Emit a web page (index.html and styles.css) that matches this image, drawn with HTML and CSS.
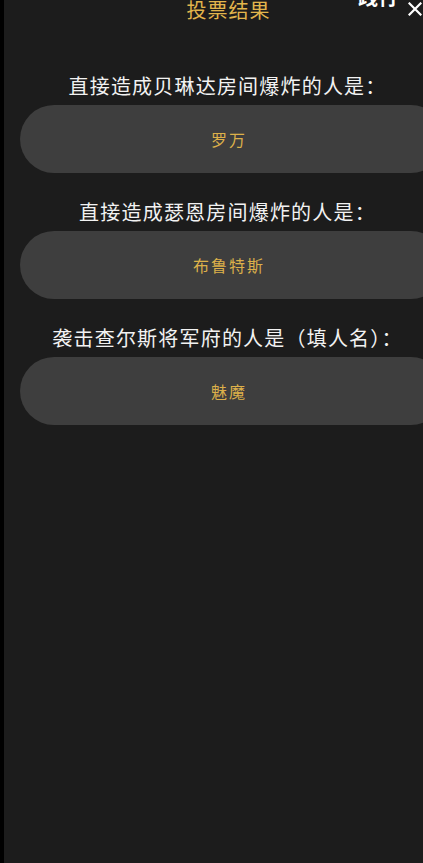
FILE: index.html
```html
<!DOCTYPE html>
<html lang="zh-CN">
  <head>
    <meta charset="UTF-8" />
    <meta name="viewport" content="width=device-width, initial-scale=1.0" />
    <title>投票结果</title>
    <link rel="stylesheet" href="styles.css">
  </head>
  <body>
    <div class="panel">
      <div class="header">
        <span></span>
        <h1 class="title">投票结果</h1>
        <div class="header-right">
          <span class="header-link">践行</span>
          <svg class="close-icon" width="14" height="14" viewBox="0 0 14 14">
            <path d="M1.5 1.5 L12.5 12.5 M12.5 1.5 L1.5 12.5" stroke="#fff" stroke-width="2.2" stroke-linecap="square" fill="none" />
          </svg>
        </div>
      </div>

      <div class="content">
        <div class="question">
          <p class="question-text">直接造成贝琳达房间爆炸的人是：</p>
          <div class="answer">罗万</div>
        </div>
        <div class="question">
          <p class="question-text">直接造成瑟恩房间爆炸的人是：</p>
          <div class="answer">布鲁特斯</div>
        </div>
        <div class="question">
          <p class="question-text">袭击查尔斯将军府的人是（填人名）：</p>
          <div class="answer">魅魔</div>
        </div>
      </div>
    </div>
  </body>
</html>
```

FILE: styles.css
```css
body {
  margin: 0;
  padding: 0;
  background-color: #000;
  font-family: "Noto Sans CJK SC", "Noto Sans", sans-serif;
  overflow: hidden;
}

.panel {
  margin-left: 4px;
  height: 863px;
  background-color: #1c1c1c;
  overflow: hidden;
}

.header {
  display: grid;
  grid-template-columns: 1fr auto 1fr;
  padding-left: 30px;
  height: 20px;
}

.title {
  margin: 0;
  font-size: 20px;
  line-height: 20px;
  font-weight: normal;
  letter-spacing: 1px;
  color: #e2b54c;
}

.header-right {
  display: flex;
  align-items: flex-start;
  justify-content: flex-end;
  gap: 10px;
  padding-right: 1px;
}

.header-link {
  margin-top: -13px;
  font-size: 20px;
  line-height: 20px;
  font-weight: bold;
  color: #fff;
}

.close-icon {
  margin-top: 2px;
}

.content {
  width: 441px;
  padding-top: 51px;
}

.question + .question {
  margin-top: 24px;
}

.question-text {
  margin: 0 0 4px;
  padding-left: 6px;
  text-align: center;
  font-size: 20px;
  line-height: 30px;
  letter-spacing: 1.2px;
  color: #f2f2f2;
}

.answer {
  margin-left: 16px;
  height: 68px;
  border-radius: 34px;
  background-color: #3e3e3e;
  padding-right: 7px;
  display: flex;
  align-items: center;
  justify-content: center;
  font-size: 16px;
  letter-spacing: 2px;
  color: #dcb04a;
}
```
